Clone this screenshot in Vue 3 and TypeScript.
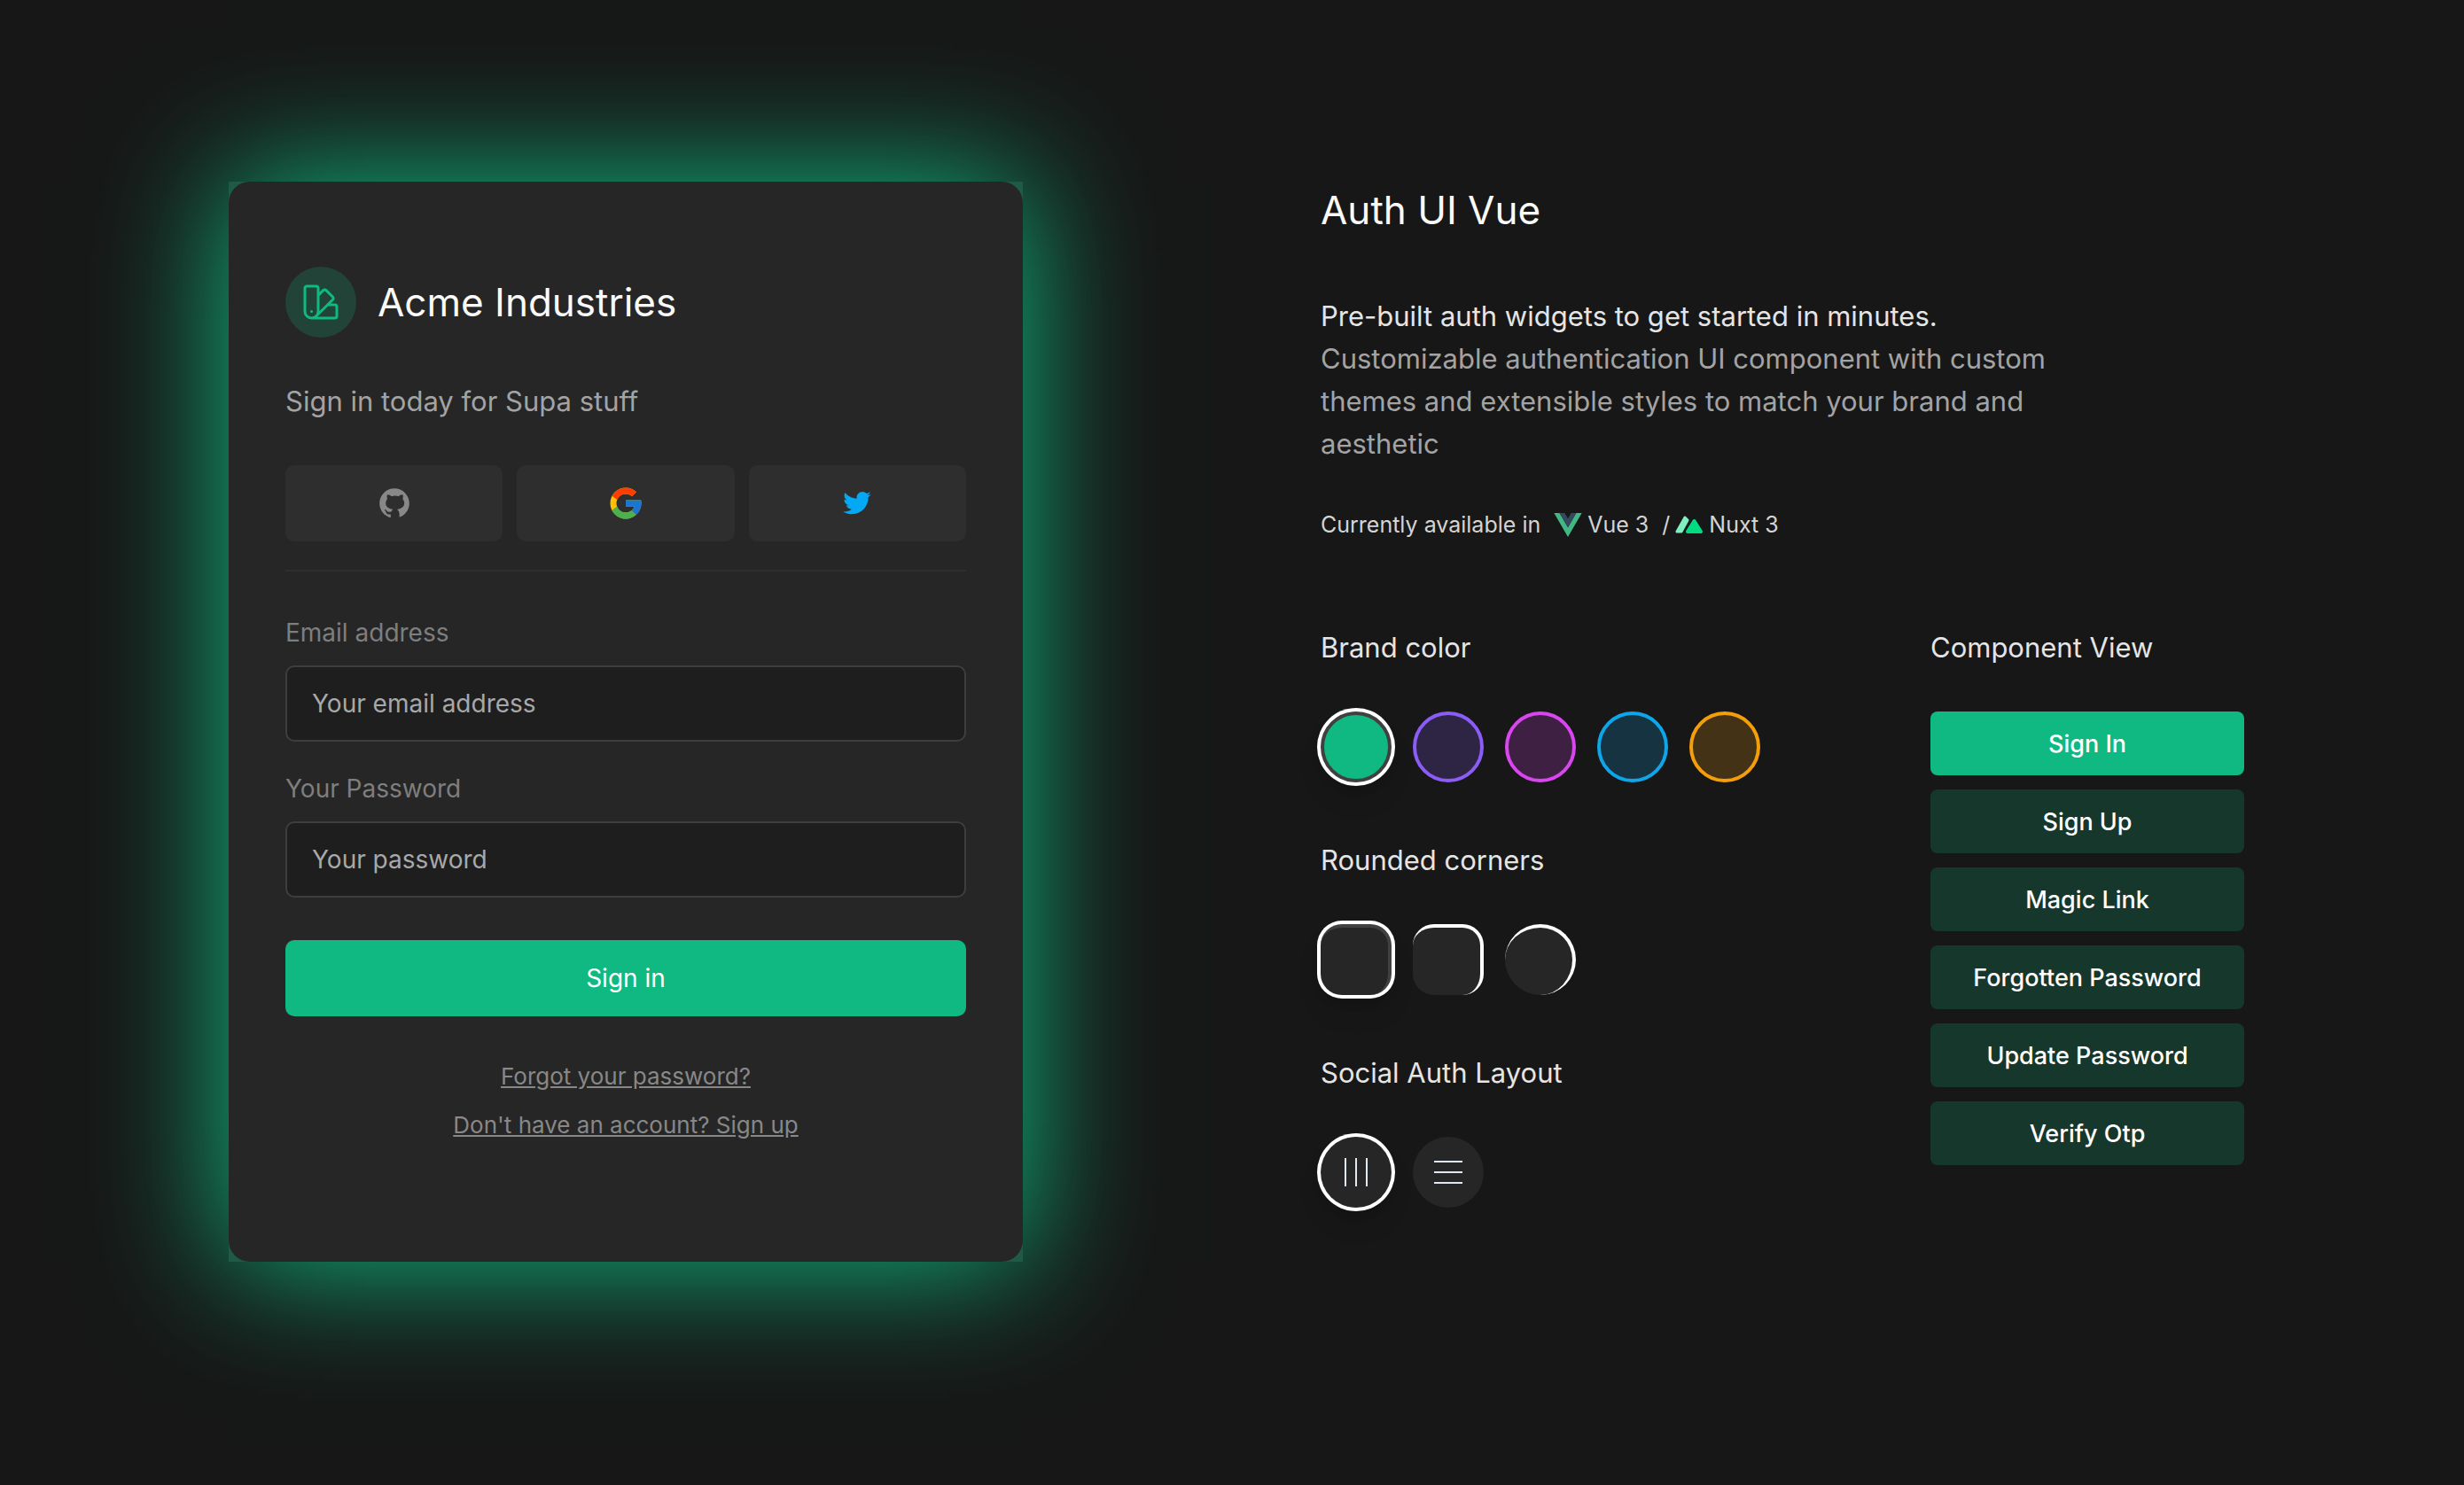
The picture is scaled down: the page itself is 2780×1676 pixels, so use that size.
<script setup lang="ts">
import { computed, ref } from 'vue'

interface Brand {
  name: string
  color: string
}

const brands: Brand[] = [
  { name: 'Emerald', color: '#10b981' },
  { name: 'Violet', color: '#8b5cf6' },
  { name: 'Fuchsia', color: '#d946ef' },
  { name: 'Sky', color: '#0ea5e9' },
  { name: 'Amber', color: '#f59e0b' },
]
const corners: string[] = ['small', 'medium', 'full']
const views: string[] = [
  'Sign In',
  'Sign Up',
  'Magic Link',
  'Forgotten Password',
  'Update Password',
  'Verify Otp',
]

const brandIndex = ref<number>(0)
const brandColor = computed<string>(() => brands[brandIndex.value].color)
const corner = ref<string>('small')
const layout = ref<'horizontal' | 'vertical'>('horizontal')
const view = ref<string>('Sign In')
const email = ref<string>('')
const password = ref<string>('')
</script>

<template>
  <main class="page" :style="{ '--brand': brandColor }">
    <section class="glow">
      <div class="card">
        <header class="card-head">
          <span class="logo">
            <svg viewBox="0 0 24 24" fill="none" stroke="currentColor" stroke-width="1.5" stroke-linecap="round" stroke-linejoin="round" aria-hidden="true">
              <path d="M4.098 19.902a3.75 3.75 0 005.304 0l6.401-6.402M6.75 21A3.75 3.75 0 013 17.25V4.125C3 3.504 3.504 3 4.125 3h5.25c.621 0 1.125.504 1.125 1.125v4.072M6.75 21a3.75 3.75 0 003.75-3.75V8.197M6.75 21h13.125c.621 0 1.125-.504 1.125-1.125v-5.25c0-.621-.504-1.125-1.125-1.125h-4.072M10.5 8.197l2.88-2.88c.438-.439 1.15-.439 1.59 0l3.712 3.713c.44.44.44 1.152 0 1.59l-2.879 2.88M6.75 17.25h.008v.008H6.75v-.008z" />
            </svg>
          </span>
          <h1 class="title">Acme Industries</h1>
        </header>
        <p class="tagline">Sign in today for Supa stuff</p>

        <div class="socials">
          <button type="button" class="social" aria-label="Sign in with GitHub">
            <svg viewBox="0 0 30 30" fill="#888888" aria-hidden="true">
              <path d="M15,3C8.373,3,3,8.373,3,15c0,5.623,3.872,10.328,9.092,11.63C12.036,26.468,12,26.28,12,26.047v-2.051 c-0.487,0-1.303,0-1.508,0c-0.821,0-1.551-0.353-1.905-1.009c-0.393-0.729-0.461-1.844-1.435-2.526 c-0.289-0.227-0.069-0.486,0.264-0.451c0.615,0.174,1.125,0.596,1.605,1.222c0.478,0.627,0.703,0.769,1.596,0.769 c0.433,0,1.081-0.025,1.691-0.121c0.328-0.833,0.895-1.6,1.588-1.962c-3.996-0.411-5.903-2.399-5.903-5.098 c0-1.162,0.495-2.286,1.336-3.233C9.053,10.647,8.706,8.73,9.435,8c1.798,0,2.885,1.166,3.146,1.481C13.477,9.174,14.461,9,15.495,9 c1.036,0,2.024,0.174,2.922,0.483C18.675,9.17,19.763,8,21.565,8c0.732,0.731,0.381,2.656,0.102,3.594 c0.836,0.945,1.328,2.066,1.328,3.226c0,2.697-1.904,4.684-5.894,5.097C18.199,20.49,19,22.1,19,23.313v2.734 c0,0.104-0.023,0.179-0.035,0.268C23.641,24.676,27,20.236,27,15C27,8.373,21.627,3,15,3z" />
            </svg>
          </button>
          <button type="button" class="social" aria-label="Sign in with Google">
            <svg viewBox="0 0 48 48" aria-hidden="true">
              <path fill="#FFC107" d="M43.611,20.083H42V20H24v8h11.303c-1.649,4.657-6.08,8-11.303,8c-6.627,0-12-5.373-12-12c0-6.627,5.373-12,12-12c3.059,0,5.842,1.154,7.961,3.039l5.657-5.657C34.046,6.053,29.268,4,24,4C12.955,4,4,12.955,4,24c0,11.045,8.955,20,20,20c11.045,0,20-8.955,20-20C44,22.659,43.862,21.35,43.611,20.083z" />
              <path fill="#FF3D00" d="M6.306,14.691l6.571,4.819C14.655,15.108,18.961,12,24,12c3.059,0,5.842,1.154,7.961,3.039l5.657-5.657C34.046,6.053,29.268,4,24,4C16.318,4,9.656,8.337,6.306,14.691z" />
              <path fill="#4CAF50" d="M24,44c5.166,0,9.86-1.977,13.409-5.192l-6.19-5.238C29.211,35.091,26.715,36,24,36c-5.202,0-9.619-3.317-11.283-7.946l-6.522,5.025C9.505,39.556,16.227,44,24,44z" />
              <path fill="#1976D2" d="M43.611,20.083H42V20H24v8h11.303c-0.792,2.237-2.231,4.166-4.087,5.571c0.001-0.001,0.002-0.001,0.003-0.002l6.19,5.238C36.971,39.205,44,34,44,24C44,22.659,43.862,21.35,43.611,20.083z" />
            </svg>
          </button>
          <button type="button" class="social" aria-label="Sign in with Twitter">
            <svg viewBox="0 0 48 48" aria-hidden="true">
              <path fill="#03A9F4" d="M42,12.429c-1.323,0.586-2.746,0.977-4.247,1.162c1.526-0.906,2.7-2.351,3.251-4.058c-1.428,0.837-3.01,1.452-4.693,1.776C34.967,9.884,33.05,9,30.926,9c-4.08,0-7.387,3.278-7.387,7.32c0,0.572,0.067,1.129,0.193,1.67c-6.138-0.308-11.582-3.226-15.224-7.654c-0.64,1.082-1,2.349-1,3.686c0,2.541,1.301,4.778,3.285,6.096c-1.211-0.037-2.351-0.374-3.349-0.914c0,0.022,0,0.055,0,0.086c0,3.551,2.547,6.508,5.923,7.181c-0.617,0.169-1.269,0.263-1.941,0.263c-0.477,0-0.942-0.054-1.392-0.135c0.94,2.902,3.667,5.023,6.898,5.086c-2.528,1.96-5.712,3.134-9.174,3.134c-0.598,0-1.183-0.034-1.761-0.104C9.268,36.786,13.152,38,17.321,38c13.585,0,21.017-11.156,21.017-20.834c0-0.317-0.01-0.633-0.025-0.945C39.763,15.197,41.013,13.905,42,12.429" />
            </svg>
          </button>
        </div>

        <hr class="divider" />

        <form class="form" @submit.prevent>
          <div class="field">
            <label for="email">Email address</label>
            <input id="email" v-model="email" type="email" placeholder="Your email address" />
          </div>
          <div class="field">
            <label for="password">Your Password</label>
            <input id="password" v-model="password" type="password" placeholder="Your password" />
          </div>
          <button type="submit" class="submit">Sign in</button>
        </form>

        <nav class="links">
          <a href="#forgot">Forgot your password?</a>
          <a href="#signup">Don't have an account? Sign up</a>
        </nav>
      </div>
    </section>

    <section class="info">
      <h2 class="title">Auth UI Vue</h2>
      <p class="lead">
        <span class="highlight">Pre-built auth widgets to get started in minutes.</span>
        Customizable authentication UI component with custom themes and extensible styles to match your brand and aesthetic
      </p>
      <div class="available">
        <span>Currently available in</span>
        <svg class="vue" viewBox="0 0 256 221" aria-hidden="true">
          <path fill="#41B883" d="m0 0 128 220.8L256 0h-51.2L128 132.48 50.56 0H0Z" />
          <path fill="#35495E" d="M50.56 0 128 133.12 204.8 0h-47.36L128 51.2 97.92 0H50.56Z" />
        </svg>
        <span>Vue 3</span>
        <span class="slash">/</span>
        <svg class="nuxt" viewBox="0 0 32 20" aria-hidden="true">
          <path d="M2 18 11 2 14 5 7 18Z" fill="#80EEC0" stroke="#80EEC0" stroke-width="3" stroke-linejoin="round" />
          <path d="M14 18 21.500 6 29 18Z" fill="#00DC82" stroke="#00DC82" stroke-width="4" stroke-linejoin="round" />
        </svg>
        <span>Nuxt 3</span>
      </div>

      <div class="settings">
        <div class="options">
          <div class="group">
            <h3>Brand color</h3>
            <div class="row">
              <button
                v-for="(b, i) in brands"
                :key="b.name"
                type="button"
                class="swatch"
                :class="{ selected: i === brandIndex }"
                :style="{ '--swatch': b.color }"
                :aria-label="b.name"
                :aria-pressed="i === brandIndex"
                @click="brandIndex = i"
              ></button>
            </div>
          </div>
          <div class="group">
            <h3>Rounded corners</h3>
            <div class="row">
              <button
                v-for="c in corners"
                :key="c"
                type="button"
                class="corner"
                :class="{ selected: c === corner, full: c === 'full' }"
                :aria-label="c"
                :aria-pressed="c === corner"
                @click="corner = c"
              ></button>
            </div>
          </div>
          <div class="group">
            <h3>Social Auth Layout</h3>
            <div class="row">
              <button type="button" class="layout" :class="{ selected: layout === 'horizontal' }" aria-label="Horizontal" @click="layout = 'horizontal'">
                <svg viewBox="0 0 32 32" stroke="#e2e8f0" stroke-width="2" aria-hidden="true">
                  <path d="M4 0v32M16 0v32M28 0v32" />
                </svg>
              </button>
              <button type="button" class="layout" :class="{ selected: layout === 'vertical' }" aria-label="Vertical" @click="layout = 'vertical'">
                <svg viewBox="0 0 32 32" stroke="#e2e8f0" stroke-width="2" aria-hidden="true">
                  <path d="M0 4h32M0 16h32M0 28h32" />
                </svg>
              </button>
            </div>
          </div>
        </div>

        <div class="views">
          <h3>Component View</h3>
          <div class="view-list">
            <button
              v-for="v in views"
              :key="v"
              type="button"
              class="view"
              :class="{ active: v === view }"
              @click="view = v"
            >{{ v }}</button>
          </div>
        </div>
      </div>
    </section>
  </main>
</template>

<style>
body {
  margin: 0;
  background: #171717;
}
</style>

<style scoped>
.page {
  box-sizing: border-box;
  min-height: 100vh;
  display: grid;
  grid-template-columns: minmax(0, 896fr) minmax(0, 1042fr);
  align-items: start;
  gap: 336px;
  padding: 205px 248px 205px 258px;
  overflow: hidden;
  background: #171717;
  color: #e5e5e5;
  font-family: Inter, "Liberation Sans", sans-serif;
  font-size: 28px;
}

h1, h2, h3, p {
  margin: 0;
  font-weight: 400;
}

button, input {
  font-family: inherit;
  font-size: 28px;
}

button {
  padding: 0;
  border: 0;
  cursor: pointer;
}

svg {
  display: block;
  flex: none;
}

.title {
  font-size: 44px;
  line-height: 64px;
  color: #fafafa;
}

/* Sign-in card */
.glow {
  background: #1f5a46;
  box-shadow: 0 0 140px 4px var(--brand);
}

.card {
  padding: 96px 64px 135px;
  border-radius: 24px;
  background: #262626;
}

.card-head {
  display: flex;
  align-items: center;
  gap: 24px;
}

.logo {
  display: grid;
  place-items: center;
  width: 80px;
  height: 80px;
  border-radius: 50%;
  background: color-mix(in srgb, var(--brand) 20%, transparent);
  color: var(--brand);
}

.logo svg {
  width: 48px;
  height: 48px;
}

.tagline {
  margin-top: 48px;
  font-size: 31px;
  line-height: 48px;
  color: #a3a3a3;
}

.socials {
  display: grid;
  grid-template-columns: repeat(3, 1fr);
  gap: 16px;
  margin-top: 48px;
}

.social {
  display: grid;
  place-items: center;
  height: 86px;
  border-radius: 10px;
  background: #2e2e2e;
}

.social svg {
  width: 42px;
  height: 42px;
}

.divider {
  height: 2px;
  margin: 32px 0 48px;
  border: 0;
  background: #2e2e2e;
}

.form {
  display: flex;
  flex-direction: column;
  gap: 32px;
}

.field {
  display: flex;
  flex-direction: column;
  gap: 16px;
  line-height: 42px;
  color: #7e7e7e;
}

.field input {
  box-sizing: border-box;
  width: 100%;
  height: 86px;
  padding: 0 28px;
  border: 2px solid #3e3e3e;
  border-radius: 10px;
  outline: 0;
  background: #1e1e1e;
  color: #ededed;
}

.field input::placeholder {
  color: #a8a8a8;
}

.submit {
  height: 86px;
  margin-top: 16px;
  border-radius: 10px;
  background: var(--brand);
  color: #fff;
}

.links {
  display: flex;
  flex-direction: column;
  align-items: center;
  gap: 16px;
  margin-top: 48px;
  font-size: 26px;
  line-height: 39px;
}

.links a {
  color: #888888;
}

/* Description and settings */
.lead {
  max-width: 840px;
  margin-top: 64px;
  font-size: 31px;
  line-height: 48px;
  color: #a3a3a3;
}

.highlight {
  display: block;
  color: #e5e5e5;
}

.available {
  display: flex;
  align-items: center;
  height: 38px;
  margin-top: 48px;
  font-size: 25px;
  color: #d4d4d4;
}

.vue {
  width: 32px;
  height: 27px;
  margin: 0 6px 0 15px;
}

.slash {
  margin: 0 6px 0 15px;
}

.nuxt {
  width: 32px;
  height: 20px;
  margin-right: 6px;
}

.settings {
  display: flex;
  justify-content: space-between;
  margin-top: 96px;
}

h3 {
  font-size: 31px;
  line-height: 48px;
}

.options {
  display: flex;
  flex-direction: column;
  gap: 64px;
}

.row {
  display: flex;
  gap: 24px;
  margin-top: 48px;
}

.swatch, .corner, .layout {
  box-sizing: border-box;
  width: 80px;
  height: 80px;
  border-radius: 50%;
}

.swatch {
  border: 4px solid var(--swatch);
  background: color-mix(in srgb, var(--swatch) 20%, #171717);
}

.corner {
  border-top: 4px solid #fff;
  border-right: 4px solid #fff;
  border-radius: 24px;
  background: #262626;
}

.corner.full {
  border-radius: 50%;
}

.layout {
  display: grid;
  place-items: center;
  background: #262626;
}

.layout svg {
  width: 32px;
  height: 32px;
}

.selected {
  border-color: #404040;
  box-shadow: 0 0 0 4px #fff, 0 20px 30px -2px rgba(0, 0, 0, 0.1), 0 8px 12px 0 rgba(0, 0, 0, 0.1);
}

.swatch.selected {
  background: var(--swatch);
}

.views {
  width: 354px;
}

.view-list {
  display: flex;
  flex-direction: column;
  gap: 16px;
  margin-top: 48px;
}

.view {
  height: 72px;
  border-radius: 8px;
  background: color-mix(in srgb, var(--brand) 20%, #171717);
  color: #fff;
  font-size: 27px;
  font-weight: 500;
}

.view.active {
  background: var(--brand);
}
</style>
